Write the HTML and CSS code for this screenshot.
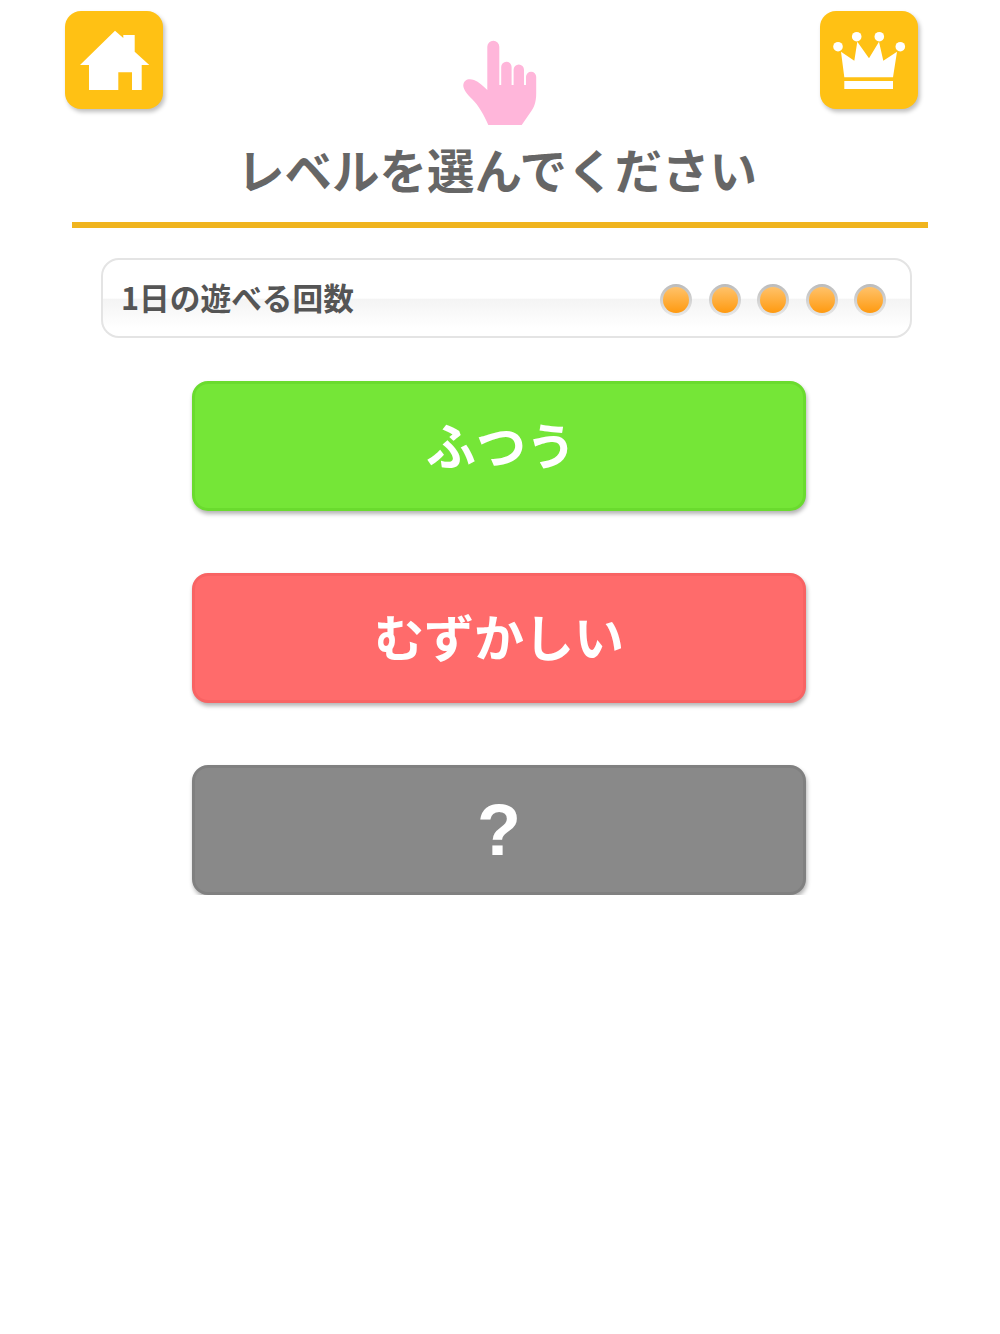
FILE: index.html
```html
<!DOCTYPE html>
<html lang="ja">

<head>
    <meta charset="UTF-8">
    <meta name="viewport" content="width=device-width, initial-scale=1.0">
    <title>level select</title>
    <link rel="stylesheet" href="styles.css">
</head>

<body>
    <div class="top">
        <div class="icon-btn">
            <svg viewBox="0 0 98 98" width="98" height="98">
                <path fill="#fff" d="M50 19.7 58.3 27V24H69.7V40.7L84.3 54H76.7V79H67V61.3H53.3V79H24V54H15Z" />
            </svg>
        </div>
        <svg class="hand" viewBox="0 0 76 86" width="76" height="86">
            <path fill="#ffb6da" d="M25.3 50V6.7a6 6 0 0 1 12 0V45H39.2V27a5.2 5.2 0 0 1 10.4 0V45H51.6V29.7a5.2 5.2 0 0 1 10.4 0V45H64V36.8a5.1 5.1 0 0 1 10.2 0V53C74.3 62 72 68 68 73L59.7 85H26.3C22 75 17 66 10 59 5 54 1 49 1.3 45 1.8 39.5 7 38 12 40 17 42 21 46 25.3 50Z" />
        </svg>
        <div class="icon-btn">
            <svg viewBox="0 0 98 98" width="98" height="98">
                <g fill="#fff">
                    <circle cx="18" cy="35.7" r="4.8" />
                    <circle cx="36.7" cy="25.7" r="4.8" />
                    <circle cx="59.3" cy="25.7" r="4.8" />
                    <circle cx="80.3" cy="35.7" r="4.8" />
                    <path d="M21 40.7 34.3 49.7 37.3 30.7 49 47.3 59 30.7 63.3 49.7 77 40.7 73 66.3H24.3Z" />
                    <rect x="24.3" y="70" width="48.7" height="8" />
                </g>
            </svg>
        </div>
    </div>

    <h1 class="title">レベルを選んでください</h1>

    <div class="count-panel">
        <span>1日の遊べる回数</span>
        <div class="dots">
            <i></i>
            <i></i>
            <i></i>
            <i></i>
            <i></i>
        </div>
    </div>

    <div class="levels">
        <div class="level green">ふつう</div>
        <div class="level red">むずかしい</div>
        <div class="level gray">?</div>
    </div>
</body>

</html>
```

FILE: styles.css
```css
body {
    margin: 0;
    background-color: #fff;
    font-family: "Noto Sans CJK JP", "Liberation Sans", sans-serif;
}

.top {
    display: flex;
    justify-content: space-between;
    align-items: flex-start;
    height: 115px;
    padding: 11px 82px 0 65px;
}

.icon-btn {
    width: 98px;
    height: 98px;
    background-color: #ffc114;
    border-radius: 16px;
    box-shadow: 2px 3px 4px rgba(0, 0, 0, 0.25);
}

.icon-btn svg {
    display: block;
}

.hand {
    margin: 29px 0 0 16px;
}

.title {
    margin: 0 72px;
    height: 96px;
    padding-right: 6px;
    border-bottom: 6px solid #f0b41e;
    color: #666;
    font-size: 47.5px;
    font-weight: bold;
    line-height: 86px;
    text-align: center;
}

.count-panel {
    display: flex;
    justify-content: space-between;
    align-items: center;
    box-sizing: border-box;
    width: 811px;
    height: 80px;
    margin: 30px 0 0 101px;
    padding: 0 24px 0 18px;
    border: 2px solid #e4e4e4;
    border-radius: 18px;
    background: linear-gradient(#fff 50%, #f4f4f4 52%, #fff 90%);
    color: #555;
    font-size: 30.7px;
    font-weight: bold;
}

.count-panel span {
    margin-top: -4px;
}

.dots {
    display: flex;
    gap: 16.5px;
    margin-top: 4px;
}

.dots i {
    display: block;
    box-sizing: border-box;
    width: 32px;
    height: 32px;
    border: 3px solid transparent;
    border-radius: 50%;
    background: linear-gradient(#ffc26a, #ff9a10) padding-box, linear-gradient(#bbb, #e8e8e8) border-box;
}

.levels {
    display: flex;
    flex-direction: column;
    gap: 62px;
    width: 614px;
    margin: 43px 0 0 192px;
}

.level {
    box-sizing: border-box;
    height: 130px;
    border: 3px solid;
    border-radius: 16px;
    box-shadow: 1px 3px 4px rgba(0, 0, 0, 0.3);
    color: #fff;
    font-size: 50px;
    font-weight: bold;
    line-height: 118px;
    text-align: center;
}

.green {
    background-color: #75e637;
    border-color: #6adb2e;
    padding-left: 4px;
}

.red {
    background-color: #ff6b6b;
    border-color: #f86363;
}

.gray {
    background-color: #898989;
    border-color: #808080;
    font-family: "Liberation Sans", sans-serif;
    font-size: 72px;
    line-height: 124px;
}
```
